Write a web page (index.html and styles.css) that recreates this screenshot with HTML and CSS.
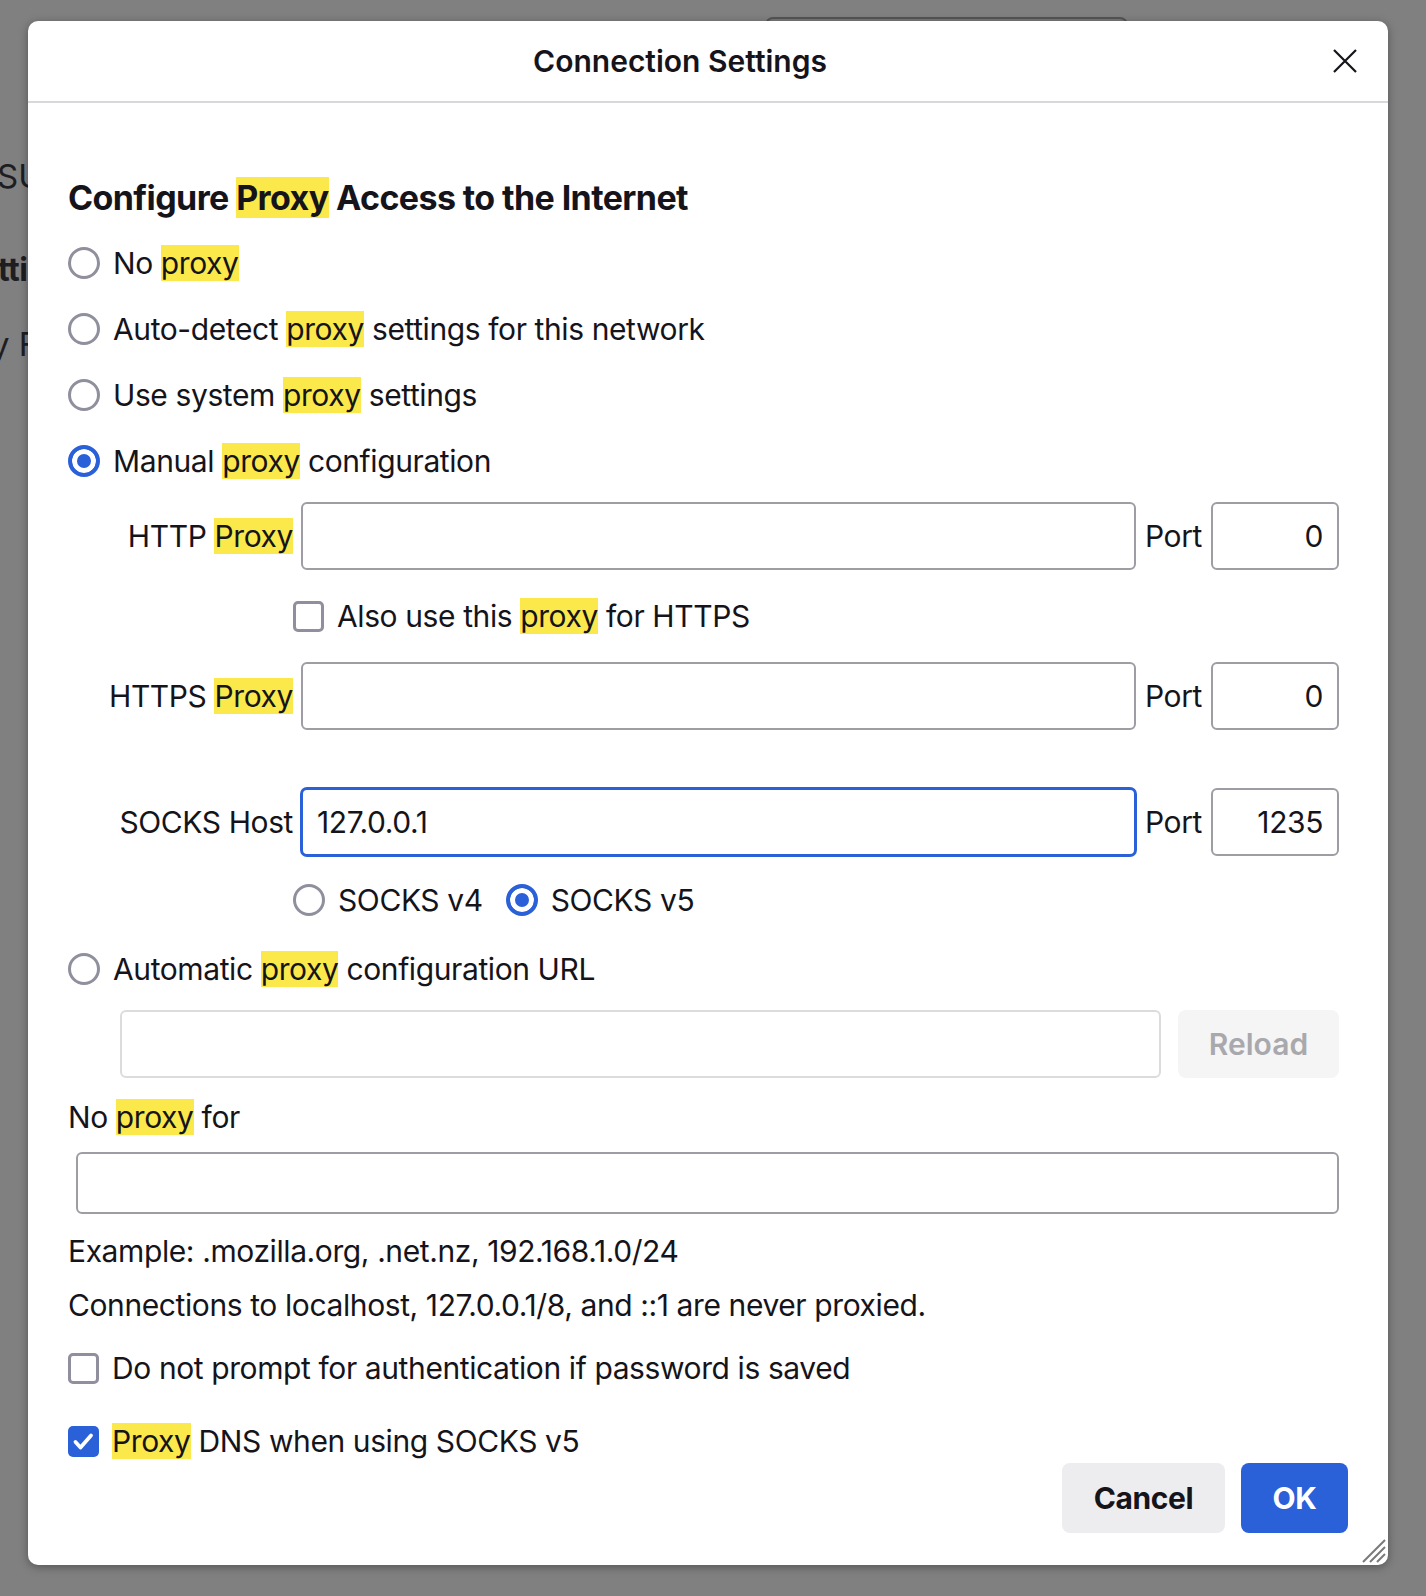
FILE: index.html
```html
<!DOCTYPE html>
<html lang="en">
<head>
<meta charset="utf-8">
<title>Connection Settings</title>
<link rel="stylesheet" href="styles.css">
</head>
<body>
<div class="page">
  <div class="bg-search"></div>
  <div class="bg-frag bg-su">SUPPORT</div>
  <div class="bg-frag bg-tti">Settings</div>
  <div class="bg-frag bg-yf">y Firefox</div>
</div>

<div class="dialog">
  <header class="dlg-head">
    <h1 class="dlg-title">Connection Settings</h1>
    <button class="close-btn" aria-label="Close">
      <svg width="26" height="26" viewBox="0 0 26 26"><path d="M2 2 L24 24 M24 2 L2 24" stroke="#15141a" stroke-width="2.2" fill="none"/></svg>
    </button>
  </header>

  <main class="dlg-body">
    <h2 class="section-title row66">Configure <mark>Proxy</mark>&nbsp;Access to the Internet</h2>

    <label class="opt row66"><span class="radio"></span><span>No <mark>proxy</mark></span></label>
    <label class="opt row66"><span class="radio"></span><span>Auto-detect <mark>proxy</mark> settings for this network</span></label>
    <label class="opt row66"><span class="radio"></span><span>Use system <mark>proxy</mark> settings</span></label>
    <label class="opt row66"><span class="radio checked"></span><span>Manual <mark>proxy</mark> configuration</span></label>

    <div class="prow prow-http">
      <span class="plabel">HTTP <mark>Proxy</mark></span>
      <input class="field" type="text" value="">
      <span class="port-label">Port</span>
      <input class="field port" type="text" value="0">
    </div>
    <div class="subrow subrow-also">
      <label class="opt"><span class="check"></span><span>Also use this <mark>proxy</mark> for HTTPS</span></label>
    </div>
    <div class="prow">
      <span class="plabel">HTTPS <mark>Proxy</mark></span>
      <input class="field" type="text" value="">
      <span class="port-label">Port</span>
      <input class="field port" type="text" value="0">
    </div>
    <div class="prow prow-socks">
      <span class="plabel">SOCKS Host</span>
      <input class="field focused" type="text" value="127.0.0.1">
      <span class="port-label">Port</span>
      <input class="field port" type="text" value="1235">
    </div>
    <div class="subrow subrow-socks">
      <label class="opt"><span class="radio"></span><span>SOCKS v4</span></label>
      <label class="opt"><span class="radio checked"></span><span>SOCKS v5</span></label>
    </div>

    <label class="opt auto-row"><span class="radio"></span><span>Automatic <mark>proxy</mark> configuration URL</span></label>
    <div class="url-row">
      <input class="field disabled" type="text" value="" disabled>
      <button class="btn reload" disabled>Reload</button>
    </div>

    <div class="text-line noproxy-label">No <mark>proxy</mark> for</div>
    <textarea class="field noproxy"></textarea>
    <div class="text-line example">Example: .mozilla.org, .net.nz, 192.168.1.0/24</div>
    <div class="text-line connections">Connections to localhost, 127.0.0.1/8, and ::1 are never proxied.</div>

    <label class="opt cb-row cb-auth"><span class="check"></span><span>Do not prompt for authentication if password is saved</span></label>
    <label class="opt cb-row cb-dns"><span class="check checked"><svg width="31" height="31" viewBox="0 0 31 31"><path d="M7.5 16 L12.5 21.5 L23 9.5" stroke="#fff" stroke-width="3.8" fill="none" stroke-linecap="round" stroke-linejoin="round"/></svg></span><span><mark>Proxy</mark> DNS when using SOCKS v5</span></label>
  </main>

  <footer class="dlg-foot">
    <button class="btn cancel">Cancel</button>
    <button class="btn ok">OK</button>
  </footer>

  <svg class="grip" width="28" height="28" viewBox="0 0 28 28">
    <path d="M26 4 L4 26 M26 11 L11 26 M26 18 L18 26" stroke="#7a7a7a" stroke-width="2" fill="none"/>
  </svg>
</div>
</body>
</html>
```

FILE: styles.css
```css
* { box-sizing: border-box; }

html, body { margin: 0; padding: 0; }

body {
  width: 1426px;
  height: 1596px;
  overflow: hidden;
  position: relative;
  background: #808080;
  font-family: Inter, "Noto Sans", "Liberation Sans", sans-serif;
  color: #15141a;
}

/* underlying page, dimmed */
.page {
  display: flex;
  flex-direction: column;
}
.bg-search {
  margin: 17px 0 0 765px;
  width: 363px;
  height: 40px;
  border-radius: 8px;
  border: 2px solid #555;
  background: #7a7a7a;
}
.bg-frag {
  font-size: 33px;
  line-height: 40px;
  color: #1e1e22;
  white-space: nowrap;
}
.bg-su { margin: 99px 0 0 -3px; }
.bg-tti { margin: 54px 0 0 -41px; font-weight: 700; font-size: 32px; letter-spacing: -0.5px; }
.bg-yf { margin: 34px 0 0 -9px; }

/* dialog */
.dialog {
  position: absolute;
  left: 28px;
  top: 21px;
  width: 1360px;
  height: 1544px;
  background: #fff;
  border-radius: 10px;
  box-shadow: 0 2px 10px rgba(0, 0, 0, 0.35);
  display: flex;
  flex-direction: column;
  overflow: hidden;
}

.dlg-head {
  height: 82px;
  flex-shrink: 0;
  border-bottom: 2px solid #d7d7dc;
  display: flex;
  align-items: center;
  padding: 0 18px 0 12px;
}
.dlg-title {
  flex: 1;
  margin: 0;
  text-align: center;
  font-size: 30px;
  font-weight: 600;
}
.close-btn {
  width: 50px;
  height: 50px;
  border: 0;
  padding: 0;
  background: none;
  display: flex;
  align-items: center;
  justify-content: center;
}

.dlg-body {
  padding: 61px 49px 0 40px;
  display: flex;
  flex-direction: column;
  font-size: 30px;
  letter-spacing: -0.4px;
}

mark {
  background: #fbe94c;
  color: inherit;
}

.row66 {
  height: 66px;
  display: flex;
  align-items: center;
}

.section-title {
  margin: 0;
  font-size: 34px;
  font-weight: 700;
  letter-spacing: -0.6px;
  white-space: pre;
}

.opt {
  display: flex;
  align-items: center;
  gap: 13px;
  font-size: 30px;
  white-space: nowrap;
}

.radio {
  width: 32px;
  height: 32px;
  flex-shrink: 0;
  border-radius: 50%;
  border: 3.5px solid #8f8f9d;
  background: #fff;
}
.radio.checked {
  border: 4px solid #2a60d8;
  background: #2a60d8;
  box-shadow: inset 0 0 0 5px #fff;
}

.check {
  width: 31px;
  height: 31px;
  flex-shrink: 0;
  border-radius: 5px;
  border: 3.5px solid #8f8f9d;
  background: #fff;
  display: flex;
  align-items: center;
  justify-content: center;
}
.check.checked {
  border: 0;
  background: #2a60d8;
}

/* proxy rows */
.prow {
  height: 68px;
  display: flex;
  align-items: center;
}
.prow-http { margin-top: 8px; }
.prow-socks { margin-top: 58px; }

.plabel {
  width: 225px;
  flex-shrink: 0;
  text-align: right;
  margin-right: 8px;
  white-space: nowrap;
}
.port-label {
  width: 75px;
  flex-shrink: 0;
  padding-left: 9px;
}

.field {
  font: inherit;
  letter-spacing: inherit;
  color: inherit;
  height: 68px;
  border: 2px solid #9d9da3;
  border-radius: 6px;
  background: #fff;
  padding: 0 14px;
  outline: none;
}
.prow .field { flex: 1; min-width: 0; }
.prow .field.port {
  flex: 0 0 128px;
  text-align: right;
}
.field.focused {
  border-color: #2a60d8;
  outline: 2px solid #2a60d8;
  outline-offset: -1px;
}
.field.disabled {
  border-color: #dcdcdf;
}

.subrow {
  display: flex;
  align-items: center;
  padding-left: 225px;
}
.subrow-also { height: 92px; }
.subrow-socks { height: 88px; gap: 23px; }

.auto-row { height: 50px; }

.url-row {
  margin-top: 16px;
  height: 68px;
  padding-left: 52px;
  display: flex;
  gap: 17px;
}
.url-row .field { flex: 1; min-width: 0; }

.btn {
  font: inherit;
  font-weight: 600;
  border: 0;
  border-radius: 8px;
  padding: 0;
}
.reload {
  width: 161px;
  height: 68px;
  flex-shrink: 0;
  background: #f5f5f6;
  color: #a9a9ad;
  letter-spacing: 0;
}

.text-line {
  line-height: 38px;
  white-space: nowrap;
}
.noproxy-label { margin-top: 20px; }
.noproxy {
  display: block;
  margin: 16px 0 0 8px;
  height: 62px;
  resize: none;
}
.example { margin-top: 18px; }
.connections { margin-top: 16px; }

.cb-row { height: 38px; }
.cb-auth { margin-top: 25px; }
.cb-dns { margin-top: 35px; }

.dlg-foot {
  margin-top: 3px;
  padding-right: 40px;
  display: flex;
  justify-content: flex-end;
  gap: 16px;
}
.dlg-foot .btn {
  height: 70px;
  font-size: 30px;
  font-weight: 700;
  letter-spacing: -0.4px;
}
.cancel {
  width: 163px;
  background: #ededef;
  color: #15141a;
}
.ok {
  width: 107px;
  background: #2a60d8;
  color: #fff;
}

.grip {
  position: absolute;
  right: 1px;
  bottom: 1px;
}
```
